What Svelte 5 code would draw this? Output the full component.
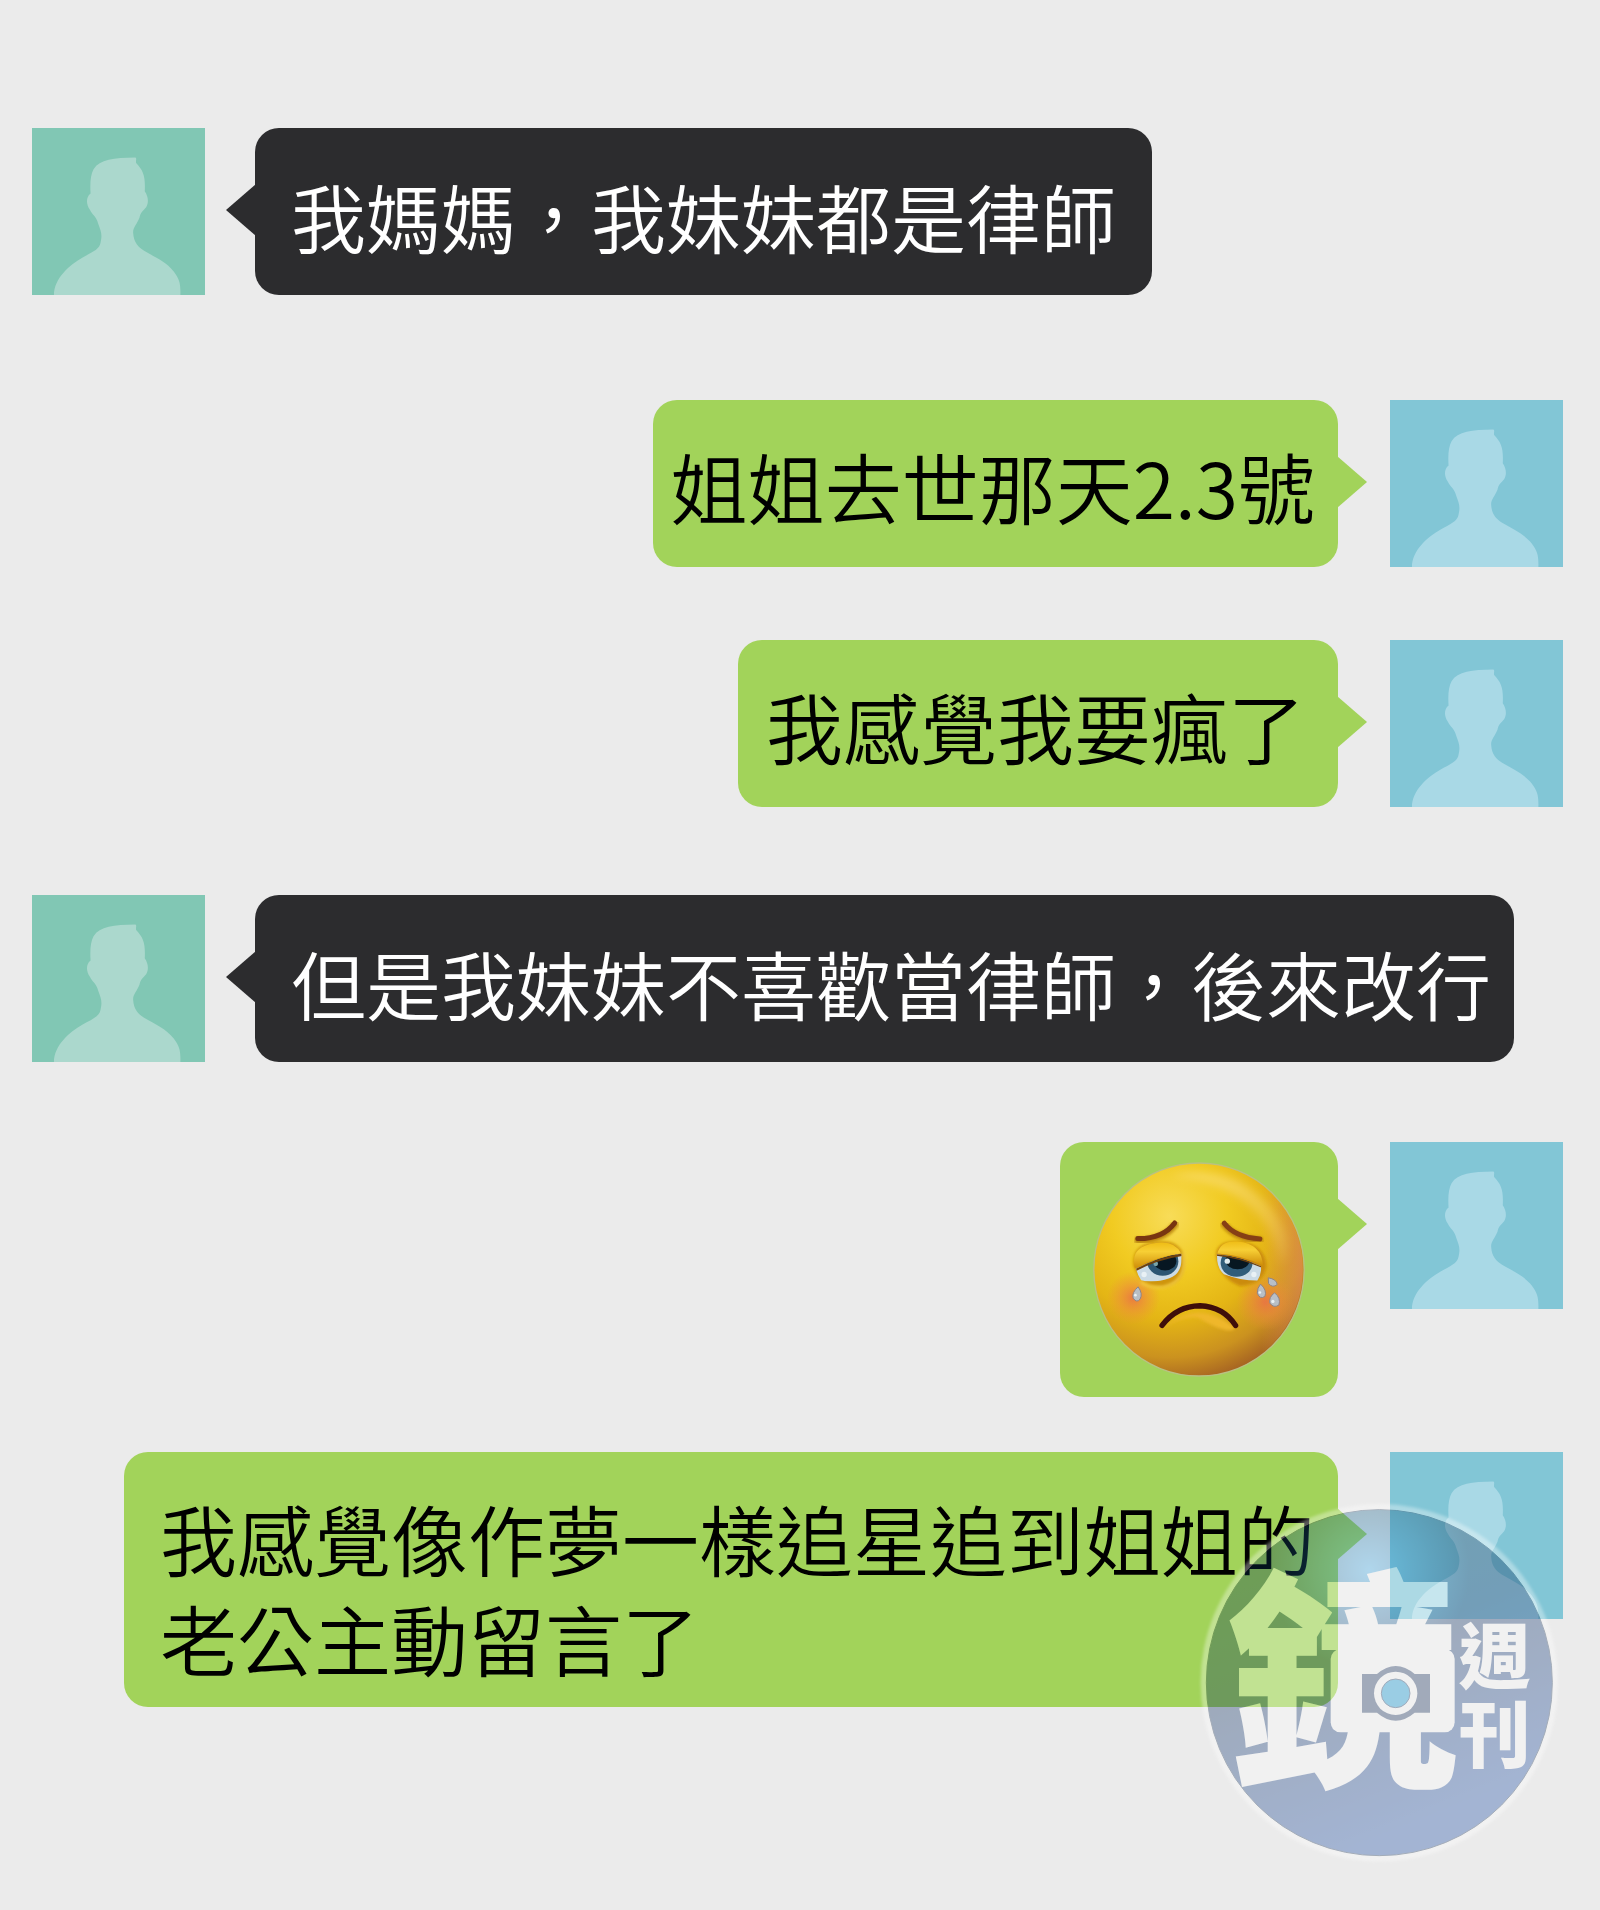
<script>
  // pad picks the inner side padding of the bubble, gap is the space above the row
  const messages = [
    { from: 'friend', text: '我媽媽，我妹妹都是律師', pad: 'wide', gap: 128 },
    { from: 'me', text: '姐姐去世那天2.3號', pad: 'tight', gap: 105 },
    { from: 'me', text: '我感覺我要瘋了', pad: 'even', gap: 73 },
    { from: 'friend', text: '但是我妹妹不喜歡當律師，後來改行', pad: 'long', gap: 88 },
    { from: 'me', sticker: true, pad: 'sticker', gap: 80 },
    { from: 'me', text: '我感覺像作夢一樣追星追到姐姐的\n老公主動留言了', pad: 'long', gap: 55 }
  ];
</script>

{#snippet avatar(from)}
  <svg class="avatar {from}" viewBox="0 0 518 502" aria-hidden="true">
    <path
      d="M65 502 C65 452 112 412 150 390 C180 373 202 365 205 345 C211 318 206 310 198 288 C192 264 180 262 173 246 C161 228 161 208 175 197 C173 165 175 140 184 124 C203 94 245 90 310 89 C315 93 310 97 312 105 C334 128 340 145 338 190 C348 206 351 222 342 238 C333 250 325 252 322 270 C314 290 302 300 303 315 C305 345 318 357 336 369 C372 390 400 401 425 431 C442 454 446 466 445 502 Z"
    />
  </svg>
{/snippet}

{#snippet sadFace()}
  <svg class="face" viewBox="157 127 640 646" role="img" aria-label="sad face">
    <defs>
      <radialGradient id="skin" cx="36%" cy="25%" r="78%">
        <stop offset="0" stop-color="#f8dc58" />
        <stop offset="0.35" stop-color="#f1cb22" />
        <stop offset="0.62" stop-color="#e4b515" />
        <stop offset="0.85" stop-color="#cb921f" />
        <stop offset="1" stop-color="#a86622" />
      </radialGradient>
      <radialGradient id="blush">
        <stop offset="0" stop-color="#ea7345" stop-opacity="0.9" />
        <stop offset="0.5" stop-color="#ee8640" stop-opacity="0.5" />
        <stop offset="1" stop-color="#ee8f3c" stop-opacity="0" />
      </radialGradient>
      <linearGradient id="lid" x1="0" y1="0" x2="0" y2="1">
        <stop offset="0" stop-color="#efbd16" />
        <stop offset="0.35" stop-color="#f7cf35" />
        <stop offset="1" stop-color="#cf8d08" />
      </linearGradient>
      <linearGradient id="shine" x1="0" y1="0" x2="0" y2="1">
        <stop offset="0" stop-color="#fbe07c" stop-opacity="0.6" />
        <stop offset="1" stop-color="#fbd88c" stop-opacity="0.1" />
      </linearGradient>
      <linearGradient id="rim" x1="0" y1="0" x2="1" y2="0">
        <stop offset="0.8" stop-color="#e59a45" stop-opacity="0" />
        <stop offset="1" stop-color="#de8a50" stop-opacity="0.7" />
      </linearGradient>
      <filter id="soft"><feGaussianBlur stdDeviation="5" /></filter>
      <filter id="softer"><feGaussianBlur stdDeviation="12" /></filter>
      <clipPath id="eyeLeft"><path d="M288 448 Q350 415 424 402 Q430 462 388 476 Q340 492 303 482 Q292 466 288 448Z" /></clipPath>
      <clipPath id="eyeRight"><path d="M531 404 Q600 412 664 440 Q664 468 652 484 Q600 482 552 464 Q530 446 531 404Z" /></clipPath>
    </defs>
    <ellipse cx="477" cy="450" rx="316" ry="320" fill="url(#skin)" stroke="#b9c184" stroke-width="4" />
    <ellipse cx="477" cy="450" rx="312" ry="316" fill="url(#rim)" />
    <path d="M390 170 Q500 138 600 188 Q705 250 740 350 Q750 430 720 430 Q690 290 585 228 Q500 180 390 170Z" fill="url(#shine)" filter="url(#softer)" />
    <circle cx="280" cy="535" r="80" fill="url(#blush)" />
    <circle cx="676" cy="548" r="86" fill="url(#blush)" />

    <!-- brows -->
    <path d="M293 363 Q368 364 405 315" fill="none" stroke="#b98410" stroke-width="20" stroke-linecap="round" filter="url(#soft)" />
    <path d="M293 357 Q368 358 404 310" fill="none" stroke="#783511" stroke-width="15" stroke-linecap="round" />
    <path d="M553 315 Q585 357 660 362" fill="none" stroke="#b98410" stroke-width="20" stroke-linecap="round" filter="url(#soft)" />
    <path d="M553 311 Q585 353 660 358" fill="none" stroke="#864015" stroke-width="15" stroke-linecap="round" />

    <!-- eye sockets -->
    <path d="M280 440 Q274 382 330 370 Q410 352 430 405 Q445 490 370 502 Q308 508 280 440Z" fill="#cf9508" filter="url(#soft)" />
    <path d="M284 446 Q270 389 328 374 Q402 356 423 402 Q352 410 284 446Z" fill="url(#lid)" />
    <path d="M430 398 Q444 485 372 502 Q330 508 302 488" fill="none" stroke="#f3cc47" stroke-width="7" filter="url(#soft)" />
    <path d="M528 405 Q532 365 590 366 Q674 370 680 438 Q673 496 600 500 Q535 475 528 405Z" fill="#cb8b0d" filter="url(#soft)" />
    <path d="M532 402 Q542 362 592 366 Q666 372 669 438 Q606 406 532 402Z" fill="url(#lid)" />

    <!-- eyes -->
    <g clip-path="url(#eyeLeft)">
      <rect x="280" y="395" width="155" height="100" fill="#cbdbe6" />
      <ellipse cx="368" cy="425" rx="47" ry="44" fill="#2d5673" />
      <ellipse cx="375" cy="425" rx="34" ry="28" fill="#071722" />
      <circle cx="347" cy="433" r="7" fill="#79a4a9" />
      <path d="M284 451 Q350 415 427 404" fill="none" stroke="#6d400e" stroke-width="10" />
    </g>
    <g clip-path="url(#eyeRight)">
      <rect x="525" y="395" width="145" height="100" fill="#cbdbe6" />
      <ellipse cx="590" cy="430" rx="48" ry="42" fill="#315d7a" />
      <ellipse cx="593" cy="423" rx="36" ry="26" fill="#071722" />
      <circle cx="562" cy="425" r="8" fill="#dfebee" />
      <path d="M530 404 Q604 412 670 441" fill="none" stroke="#6d400e" stroke-width="10" />
    </g>

    <!-- tears -->
    <g fill="#b8bfc6" stroke="#8e8587" stroke-width="3">
      <path d="M294 502 Q309 522 300 539 Q290 552 279 536 Q274 520 294 502Z" />
      <path d="M662 494 Q682 512 675 531 Q660 541 652 521 Q652 505 662 494Z" />
      <path d="M685 475 Q710 479 712 495 Q698 507 686 492Z" />
      <path d="M704 520 Q724 536 717 557 Q701 567 690 551 Q686 533 704 520Z" />
    </g>
    <g fill="#e9f1f5">
      <circle cx="286" cy="527" r="4" />
      <circle cx="660" cy="519" r="4" />
      <circle cx="699" cy="546" r="5" />
      <circle cx="312" cy="465" r="8" />
      <circle cx="642" cy="465" r="8" />
    </g>

    <!-- mouth -->
    <path d="M372 625 Q470 535 585 625 Q570 650 475 595 Q430 587 372 625Z" fill="#efb72b" filter="url(#soft)" />
    <path d="M366 618 Q410 560 480 559 Q550 562 587 618" fill="none" stroke="#3f0e0a" stroke-width="16" stroke-linecap="round" />
  </svg>
{/snippet}

<main class="chat">
  <ol class="messages">
    {#each messages as message}
      <li class="row {message.from}" style:margin-top="{message.gap}px">
        {@render avatar(message.from)}
        <div class="bubble {message.pad}">
          {#if message.sticker}
            {@render sadFace()}
          {:else}
            <p>{message.text}</p>
          {/if}
        </div>
      </li>
    {/each}
  </ol>

  <svg class="watermark" viewBox="50 180 1101 1101" role="img" aria-label="鏡週刊">
    <defs>
      <linearGradient id="disc" x1="0" y1="0" x2="0.4" y2="1">
        <stop offset="0" stop-color="#0a3c48" />
        <stop offset="0.5" stop-color="#0c2f62" />
        <stop offset="1" stop-color="#1b4da8" />
      </linearGradient>
      <radialGradient id="glow" gradientUnits="userSpaceOnUse" cx="570" cy="390" r="300">
        <stop offset="0" stop-color="#3fb0f0" />
        <stop offset="1" stop-color="#3fb0f0" stop-opacity="0" />
      </radialGradient>
      <filter id="edge"><feGaussianBlur stdDeviation="4" /></filter>
    </defs>
    <circle cx="600" cy="728" r="536" fill="#fff" filter="url(#edge)" />
    <circle cx="600" cy="728" r="519" fill="url(#disc)" stroke="#1b3558" stroke-width="3" />
    <circle cx="600" cy="728" r="518" fill="url(#glow)" />
    <text class="mark" x="142" y="984" font-size="695">鏡</text>
    <text class="mark" x="838" y="730" font-size="215">週</text>
    <text class="mark" x="838" y="964" font-size="215">刊</text>
    <rect x="454" y="627" width="372" height="250" rx="30" fill="#fff" />
    <path d="M548 702 H593 Q649 654 706 702 H752 V818 H706 Q649 866 593 818 H548 Z" fill="#16305e" />
    <circle cx="649" cy="760" r="65" fill="#fff" />
    <circle cx="649" cy="760" r="43" fill="#0096d7" stroke="#16305e" stroke-width="3" />
  </svg>
</main>

<style>
  :global(body) {
    margin: 0;
    background: #ebebeb;
  }

  .chat {
    position: relative;
    display: flow-root;
    padding: 0 37px 203px 32px;
    font-family: 'Noto Sans CJK TC', 'Noto Sans', sans-serif;
    font-weight: 350;
  }

  .messages {
    display: flex;
    flex-direction: column;
    margin: 0;
    padding: 0;
    list-style: none;
  }

  .row {
    display: flex;
    align-items: flex-start;
    gap: 50px;
  }

  .row.me {
    flex-direction: row-reverse;
    gap: 52px;
  }

  .avatar {
    flex: none;
    width: 173px;
    height: 167px;
  }

  .avatar.friend {
    background: #81c7b4;
    fill: #abd8cd;
  }

  .avatar.me {
    background: #82c6d6;
    fill: #a9d9e6;
  }

  .bubble {
    position: relative;
    box-sizing: border-box;
    min-height: 167px;
    padding-top: 36px;
    padding-bottom: 19px;
    border-radius: 24px;
    line-height: 100px;
  }

  .friend .bubble {
    padding-top: 38px;
    background: #2c2c2e;
    color: #fff;
    font-size: 75px;
  }

  .me .bubble {
    background: #a2d35a;
    color: #000;
    font-size: 77px;
  }

  .bubble::before {
    content: '';
    position: absolute;
    top: 56px;
    width: 30px;
    height: 52px;
  }

  .friend .bubble::before {
    right: 100%;
    margin-right: -1px;
    background: #2c2c2e;
    clip-path: polygon(100% 0, 0 50%, 100% 100%);
  }

  .me .bubble::before {
    left: 100%;
    margin-left: -1px;
    background: #a2d35a;
    clip-path: polygon(0 0, 100% 50%, 0 100%);
  }

  .bubble.wide {
    padding-left: 36px;
    padding-right: 36px;
  }

  .bubble.long {
    padding-left: 36px;
    padding-right: 23px;
  }

  .bubble.even {
    padding-left: 28px;
    padding-right: 33px;
  }

  .bubble.tight {
    padding-left: 18px;
    padding-right: 23px;
  }

  .bubble.sticker {
    padding: 20px 32px;
  }

  .bubble p {
    margin: 0;
    white-space: pre-line;
  }

  .face {
    display: block;
    width: 214px;
    height: 215px;
  }

  .watermark {
    position: absolute;
    right: 37px;
    bottom: 43px;
    width: 367px;
    height: 367px;
    opacity: 0.34;
  }

  .mark {
    fill: #fff;
    font-weight: 900;
  }
</style>
